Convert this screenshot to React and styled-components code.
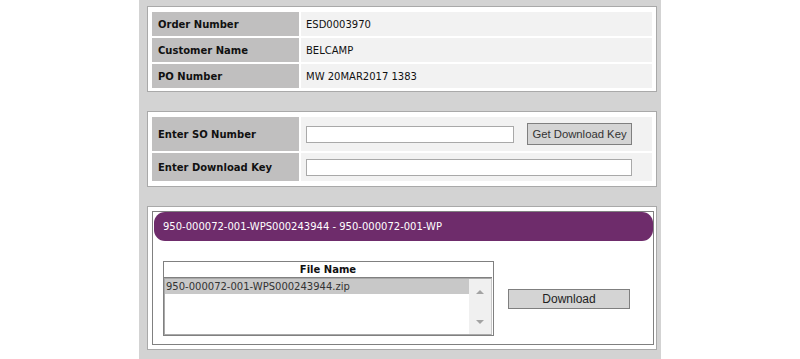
import styled, { createGlobalStyle } from "styled-components";

const GlobalStyle = createGlobalStyle`
    html, body {
        margin: 0;
        padding: 0;
        background: #ffffff;
    }
    body {
        font-family: "DejaVu Sans", Verdana, sans-serif;
        font-size: 10px;
        color: #000;
    }
`;

const order = [
    { label: "Order Number", value: "ESD0003970" },
    { label: "Customer Name", value: "BELCAMP" },
    { label: "PO Number", value: "MW 20MAR2017 1383" },
];

const App = () => {
    return <>
        <GlobalStyle />
        <Column>
            <Panel>
                <InfoGrid>
                    {order.map((row) => (
                        <Row key={row.label}>
                            <Label $h={24}>{row.label}</Label>
                            <Value $h={24}>{row.value}</Value>
                        </Row>
                    ))}
                </InfoGrid>
            </Panel>

            <Panel>
                <InfoGrid>
                    <Row>
                        <Label $h={34}>Enter SO Number</Label>
                        <Value $h={34}>
                            <TextInput $w={208} />
                            <KeyButton>Get Download Key</KeyButton>
                        </Value>
                    </Row>
                    <Row>
                        <Label $h={28}>Enter Download Key</Label>
                        <Value $h={28}>
                            <TextInput $w={326} />
                        </Value>
                    </Row>
                </InfoGrid>
            </Panel>

            <Panel $pr={2}>
                <FileBox>
                    <FileHeader>950-000072-001-WPS000243944 - 950-000072-001-WP</FileHeader>
                    <FileBody>
                        <FileTable>
                            <FileTitle>File Name</FileTitle>
                            <ListBox>
                                <Items>
                                    <Item $selected>950-000072-001-WPS000243944.zip</Item>
                                </Items>
                                <Scroll>
                                    <Arrow $dir="up" />
                                    <Arrow $dir="down" />
                                </Scroll>
                            </ListBox>
                        </FileTable>
                        <DownloadButton>Download</DownloadButton>
                    </FileBody>
                </FileBox>
            </Panel>
        </Column>
    </>
}

const Column = styled.div`
    width: 522px;
    margin: 0 auto;
    min-height: 100vh;
    box-sizing: border-box;
    padding: 6px 0 0 8px;
    background: #d3d3d3;
`;

const Panel = styled.div`
    width: 510px;
    box-sizing: border-box;
    background: #fff;
    border: 1px solid #a9a9a9;
    padding: 5px ${(p) => p.$pr ?? 4}px 3px 4px;
    margin-bottom: 19px;

    & + & {
        padding-bottom: 5px;
    }
    &:last-child {
        padding: 4px ${(p) => p.$pr ?? 4}px 4px 4px;
    }
`;

const InfoGrid = styled.div`
    display: flex;
    flex-direction: column;
    gap: 2px;
`;

const Row = styled.div`
    display: grid;
    grid-template-columns: 147px 1fr;
    gap: 2px;
`;

const Label = styled.div`
    height: ${(p) => p.$h}px;
    display: flex;
    align-items: center;
    padding-left: 6px;
    background: #c0bfbf;
    font-weight: bold;
    color: #111;
`;

const Value = styled.div`
    height: ${(p) => p.$h}px;
    display: flex;
    align-items: center;
    padding-left: 5px;
    background: #f2f2f2;
    color: #111;
`;

const TextInput = styled.input`
    width: ${(p) => p.$w}px;
    height: 17px;
    box-sizing: border-box;
    border: 1px solid #a9a9a9;
    background: #fff;
    margin: 0;
    padding: 0 2px;
    outline: none;
`;

const KeyButton = styled.button`
    margin-left: 13px;
    width: 105px;
    height: 22px;
    padding: 0;
    background: #d4d4d4;
    border: 1px solid #7f7f7f;
    color: #333;
    font-family: "Liberation Sans", Arial, sans-serif;
    font-size: 11.3px;
`;

const FileBox = styled.div`
    border: 1px solid #808080;
    padding: 0 0 8px 1px;
`;

const FileHeader = styled.div`
    height: 29px;
    display: flex;
    align-items: center;
    padding-left: 9px;
    border-radius: 11px;
    background: #6e2c6b;
    color: #fff;
`;

const FileBody = styled.div`
    display: flex;
    align-items: center;
    gap: 14px;
    padding: 20px 0 0 9px;
`;

const FileTable = styled.div`
    width: 331px;
    box-sizing: border-box;
    border: 1px solid #808080;
    padding: 0 1px 0 0;
`;

const FileTitle = styled.div`
    height: 15px;
    line-height: 15px;
    text-align: center;
    font-weight: bold;
    border-bottom: 1px solid #808080;
    color: #111;
`;

const ListBox = styled.div`
    height: 57px;
    box-sizing: border-box;
    display: flex;
    border: 1px solid #a9a9a9;
    border-right-color: #c8c8c8;
    background: #fff;
`;

const Items = styled.div`
    flex: 1;
`;

const Item = styled.div`
    height: 15px;
    line-height: 15px;
    padding-left: 1px;
    color: #333;
    background: ${(p) => (p.$selected ? "#c8c8c8" : "transparent")};
`;

const Scroll = styled.div`
    width: 22px;
    background: #f0f0f0;
    display: flex;
    flex-direction: column;
    justify-content: space-between;
    align-items: center;
    padding: 11px 0 10px;
`;

const Arrow = styled.span`
    width: 0;
    height: 0;
    border-left: 4px solid transparent;
    border-right: 4px solid transparent;
    ${(p) => p.$dir === "up"
        ? "border-bottom: 4px solid #a3a3a3;"
        : "border-top: 4px solid #a3a3a3;"}
`;

const DownloadButton = styled.button`
    width: 122px;
    height: 20px;
    padding: 0;
    background: #d4d4d4;
    border: 1px solid #7f7f7f;
    color: #222;
    font-family: "Liberation Sans", Arial, sans-serif;
    font-size: 12px;
`;

export default App;
